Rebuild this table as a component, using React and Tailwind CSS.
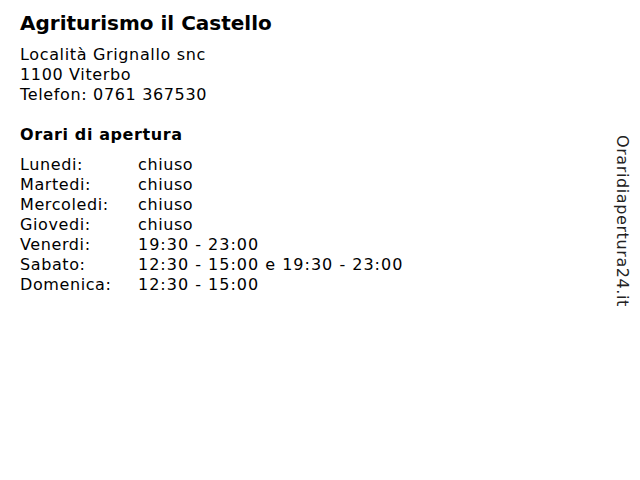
export default function App() {
  return (
    <div className="relative w-[640px] h-[480px] bg-white text-black" style={{ fontFamily: '"DejaVu Sans", Verdana, sans-serif' }}>
      <div className="pl-[20px] pt-[11px]">
        <h1 className="text-[20px] leading-[24px] font-bold">Agriturismo il Castello</h1>
        <div className="mt-[10px] text-[16px] leading-[20px] tracking-[0.65px]">
          <div>Località Grignallo snc</div>
          <div>1100 Viterbo</div>
          <div>Telefon: 0761 367530</div>
        </div>
        <h2 className="mt-[20px] text-[16px] leading-[20px] font-bold tracking-[0.6px]">Orari di apertura</h2>
        <div className="mt-[10px] text-[16px] leading-[20px] tracking-[0.6px]">
          <div className="flex">
            <div className="w-[118px]">Lunedi:</div>
            <div>chiuso</div>
          </div>
          <div className="flex">
            <div className="w-[118px]">Martedi:</div>
            <div>chiuso</div>
          </div>
          <div className="flex">
            <div className="w-[118px]">Mercoledi:</div>
            <div>chiuso</div>
          </div>
          <div className="flex">
            <div className="w-[118px]">Giovedi:</div>
            <div>chiuso</div>
          </div>
          <div className="flex">
            <div className="w-[118px]">Venerdi:</div>
            <div className="tracking-[1px]">19:30 - 23:00</div>
          </div>
          <div className="flex">
            <div className="w-[118px]">Sabato:</div>
            <div className="tracking-[1px]">12:30 - 15:00 e 19:30 - 23:00</div>
          </div>
          <div className="flex">
            <div className="w-[118px]">Domenica:</div>
            <div className="tracking-[1px]">12:30 - 15:00</div>
          </div>
        </div>
      </div>
      <div
        className="absolute left-[612px] top-[135px] text-[16px] leading-[20px] tracking-[0.6px] text-[#222]"
        style={{ writingMode: "vertical-rl" }}
      >
        Oraridiapertura24.it
      </div>
    </div>
  );
}
